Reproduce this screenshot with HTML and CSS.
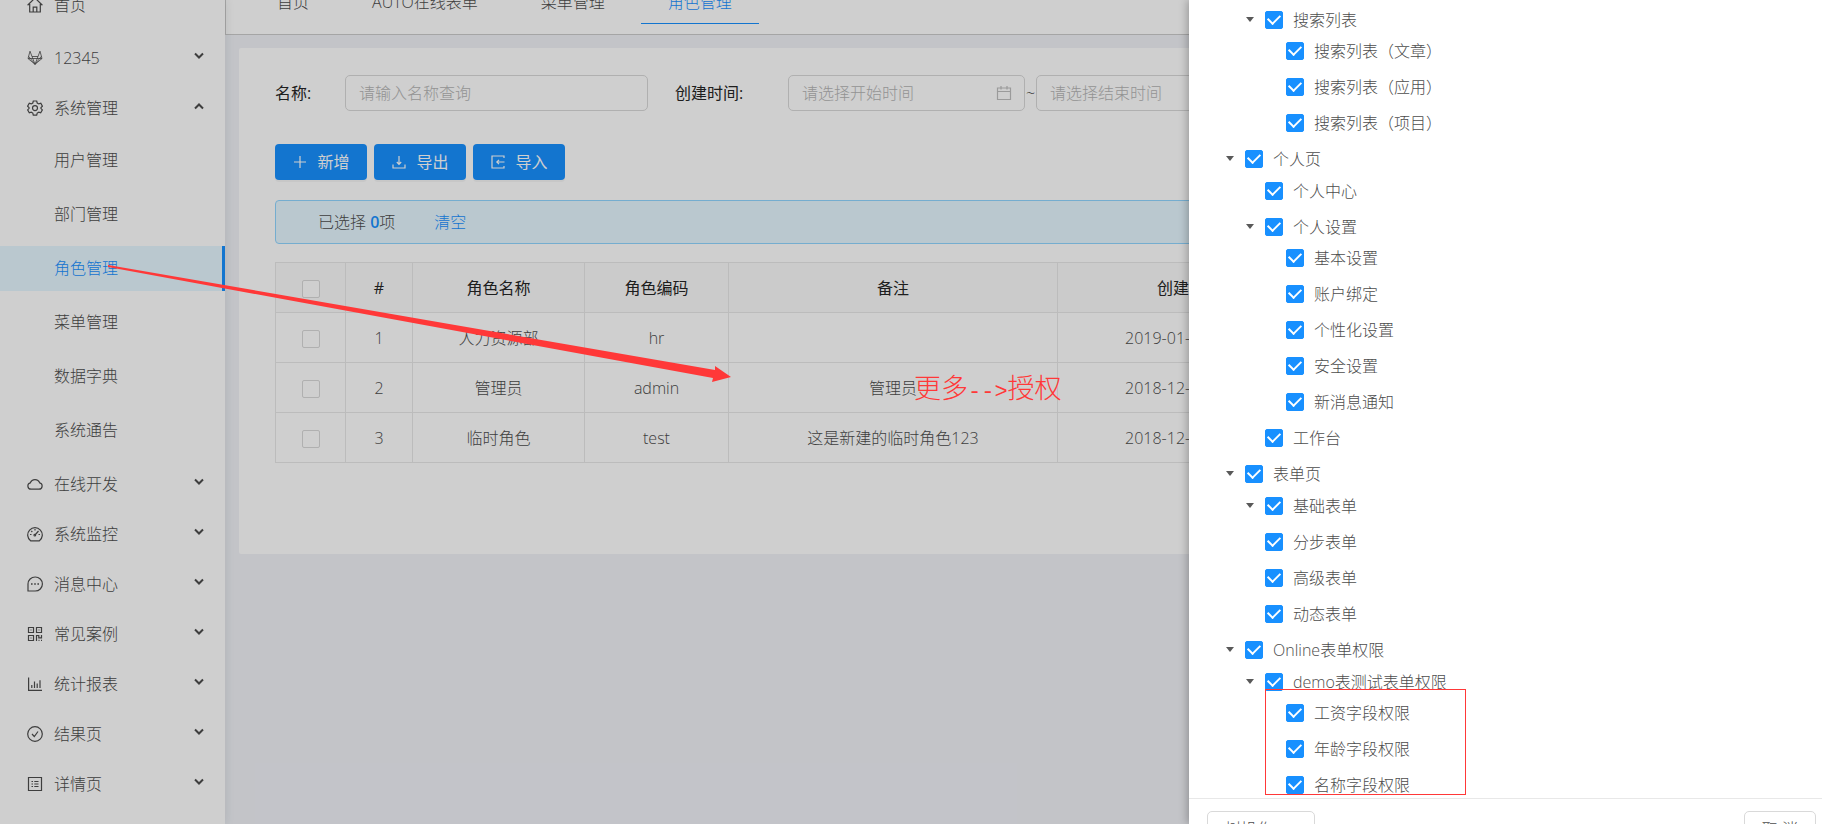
FILE: index.html
```html
<!DOCTYPE html>
<html lang="zh-CN">
<head>
<meta charset="utf-8">
<title>角色管理</title>
<link rel="stylesheet" href="styles.css">
</head>
<body>
<svg class="defs" aria-hidden="true">
  <symbol id="down" viewBox="0 0 10 10"><path d="M1 2.5 5 6.5 9 2.5" stroke-width="2"/></symbol>
  <symbol id="up" viewBox="0 0 10 10"><path d="M1 7.5 5 3.5 9 7.5" stroke-width="2"/></symbol>
  <symbol id="calendar" viewBox="0 0 16 16"><path d="M1.5 3h13v11.500h-13zM1.500 6.500h13M5 1v3.500M11 1v3.500"/></symbol>
</svg>

<div class="app">
  <aside class="sidebar">
    <nav class="menu">
      <a class="item home" href="#"><svg class="icon" viewBox="0 0 16 16"><path d="M.6 8.200 8 1l7.400 7.200M2.700 7v8h10.600V7M6.200 15v-4.800h3.600V15"/></svg><span>首页</span></a>
      <a class="item" href="#"><svg class="icon thin" viewBox="0 0 16 16"><path d="M3 1.200 1 8.500 8 14.300l7-5.800-2-7.300-2 5.300H5zM1 8.500h14M5 6.500 8 14.300l3-7.800M1.600 6.300 8 14.300l6.400-8"/></svg><span>12345</span><svg class="arrow"><use href="#down"/></svg></a>
      <a class="item" href="#"><svg class="icon" viewBox="0 0 16 16"><path d="M6.300 1h3.400l.5 2 1.600.9 2-.6 1.600 2.900L14 7.600v1l1.400 1.300-1.700 2.900-1.900-.6-1.600.9-.5 2H6.300l-.5-2-1.600-.9-1.900.6L.6 9.900 2 8.600v-1L.6 6.200l1.700-2.900 1.900.6 1.600-.9z"/><circle cx="8" cy="8.100" r="2.500"/></svg><span>系统管理</span><svg class="arrow"><use href="#up"/></svg></a>
      <div class="submenu">
        <a class="subitem" href="#">用户管理</a>
        <a class="subitem" href="#">部门管理</a>
        <a class="subitem selected" href="#">角色管理</a>
        <a class="subitem" href="#">菜单管理</a>
        <a class="subitem" href="#">数据字典</a>
        <a class="subitem" href="#">系统通告</a>
      </div>
      <a class="item" href="#"><svg class="icon" viewBox="0 0 16 16"><path d="M4 13.200h8a3.200 3.200 0 0 0 .7-6.300 5 5 0 0 0-9.400 0A3.200 3.200 0 0 0 4 13.200z"/></svg><span>在线开发</span><svg class="arrow"><use href="#down"/></svg></a>
      <a class="item" href="#"><svg class="icon" viewBox="0 0 16 16"><path d="M3.600 14.800a7.300 7.300 0 1 1 8.800 0zM8 3v1.500M3 8.500h1.500M11.500 8.500H13M4.300 5l1 1M8 9l3.500-4"/><circle cx="7.800" cy="9.200" r=".8"/></svg><span>系统监控</span><svg class="arrow"><use href="#down"/></svg></a>
      <a class="item" href="#"><svg class="icon" viewBox="0 0 16 16"><path d="M1 15V8a7.200 7 0 1 1 7.200 7z"/><path d="M4 8h1.600M7.200 8h1.600M10.400 8H12" stroke-width="1.600"/></svg><span>消息中心</span><svg class="arrow"><use href="#down"/></svg></a>
      <a class="item" href="#"><svg class="icon" viewBox="0 0 16 16"><path d="M1.500 1.500h5v5h-5zM9.500 1.500h5v5h-5zM1.500 9.500h5v5h-5zM9.500 15V9.500h2.300v2.300h2.700V9M3.500 4h1M11.500 4h1M3.500 12h1M11.500 14.300h1M14 14.300h1"/></svg><span>常见案例</span><svg class="arrow"><use href="#down"/></svg></a>
      <a class="item" href="#"><svg class="icon" viewBox="0 0 16 16"><path d="M1.600 1.500v12.800H15M4.800 12V9M7.500 12V5.500M10.200 12V7.500M13 12V4.200"/></svg><span>统计报表</span><svg class="arrow"><use href="#down"/></svg></a>
      <a class="item" href="#"><svg class="icon" viewBox="0 0 16 16"><circle cx="8" cy="8" r="7.300"/><path d="m5 8 2.300 2.500L11 5.500"/></svg><span>结果页</span><svg class="arrow"><use href="#down"/></svg></a>
      <a class="item" href="#"><svg class="icon" viewBox="0 0 16 16"><path d="M1.500 1.500h13v13h-13zM4.500 5.500H6M4.500 8H6M4.500 10.500H6M7.300 5.500h4.200M7.300 8h4.200M7.300 10.500h4.200"/></svg><span>详情页</span><svg class="arrow"><use href="#down"/></svg></a>
    </nav>
  </aside>

  <div class="page">
    <header class="tabs">
      <a class="tab" href="#">首页</a>
      <a class="tab" href="#">AUTO在线表单</a>
      <a class="tab" href="#">菜单管理</a>
      <a class="tab active" href="#">角色管理</a>
    </header>
    <main class="content">
      <section class="card">
        <form class="filters">
          <label class="name-label" for="name">名称:</label>
          <input class="field name-field" id="name" type="text" placeholder="请输入名称查询">
          <label class="time-label" for="start">创建时间:</label>
          <span class="date"><input class="field" id="start" type="text" placeholder="请选择开始时间"><svg class="icon cal"><use href="#calendar"/></svg></span>
          <span class="tilde">~</span>
          <span class="date"><input class="field" type="text" aria-label="结束时间" placeholder="请选择结束时间"><svg class="icon cal"><use href="#calendar"/></svg></span>
        </form>
        <div class="actions">
          <button class="primary" type="button"><svg class="icon" viewBox="0 0 16 16"><path d="M8 2v12M2 8h12"/></svg>新增</button>
          <button class="primary" type="button"><svg class="icon" viewBox="0 0 16 16"><path d="M2 10.500V14h12v-3.500M8 2v8M5.800 8 8 10.300 10.200 8"/></svg>导出</button>
          <button class="primary" type="button"><svg class="icon" viewBox="0 0 16 16"><path d="M14 4V2H2v12h12v-2M14.500 8H7M9 5.800 6.800 8 9 10.200"/></svg>导入</button>
        </div>
        <div class="notice"><span>已选择 <b>0</b>项</span><a href="#">清空</a></div>
        <table class="roles">
          <colgroup><col class="c-check"><col class="c-no"><col class="c-name"><col class="c-code"><col class="c-note"><col class="c-date"><col></colgroup>
          <thead><tr><th><input class="check" type="checkbox" aria-label="全选"></th><th>#</th><th>角色名称</th><th>角色编码</th><th>备注</th><th>创建时间</th><th></th></tr></thead>
          <tbody>
            <tr><td><input class="check" type="checkbox" aria-label="人力资源部"></td><td>1</td><td>人力资源部</td><td>hr</td><td></td><td>2019-01-21 18:07</td><td></td></tr>
            <tr><td><input class="check" type="checkbox" aria-label="管理员"></td><td>2</td><td>管理员</td><td>admin</td><td>管理员</td><td>2018-12-21 18:03</td><td></td></tr>
            <tr><td><input class="check" type="checkbox" aria-label="临时角色"></td><td>3</td><td>临时角色</td><td>test</td><td>这是新建的临时角色123</td><td>2018-12-20 19:59</td><td></td></tr>
          </tbody>
        </table>
      </section>
    </main>
  </div>
</div>

<div class="mask"></div>

<aside class="drawer">
  <div class="tree-pane">
    <ul class="tree">
      <li>
        <ul>
          <li><label class="node open"><input class="check" type="checkbox" checked>搜索列表</label>
            <ul>
              <li><label class="node"><input class="check" type="checkbox" checked>搜索列表（文章）</label></li>
              <li><label class="node"><input class="check" type="checkbox" checked>搜索列表（应用）</label></li>
              <li><label class="node"><input class="check" type="checkbox" checked>搜索列表（项目）</label></li>
            </ul>
          </li>
        </ul>
      </li>
      <li><label class="node open"><input class="check" type="checkbox" checked>个人页</label>
        <ul>
          <li><label class="node"><input class="check" type="checkbox" checked>个人中心</label></li>
          <li><label class="node open"><input class="check" type="checkbox" checked>个人设置</label>
            <ul>
              <li><label class="node"><input class="check" type="checkbox" checked>基本设置</label></li>
              <li><label class="node"><input class="check" type="checkbox" checked>账户绑定</label></li>
              <li><label class="node"><input class="check" type="checkbox" checked>个性化设置</label></li>
              <li><label class="node"><input class="check" type="checkbox" checked>安全设置</label></li>
              <li><label class="node"><input class="check" type="checkbox" checked>新消息通知</label></li>
            </ul>
          </li>
          <li><label class="node"><input class="check" type="checkbox" checked>工作台</label></li>
        </ul>
      </li>
      <li><label class="node open"><input class="check" type="checkbox" checked>表单页</label>
        <ul>
          <li><label class="node open"><input class="check" type="checkbox" checked>基础表单</label></li>
          <li><label class="node"><input class="check" type="checkbox" checked>分步表单</label></li>
          <li><label class="node"><input class="check" type="checkbox" checked>高级表单</label></li>
          <li><label class="node"><input class="check" type="checkbox" checked>动态表单</label></li>
        </ul>
      </li>
      <li><label class="node open"><input class="check" type="checkbox" checked>Online表单权限</label>
        <ul>
          <li><label class="node open"><input class="check" type="checkbox" checked>demo表测试表单权限</label>
            <ul>
              <li><label class="node"><input class="check" type="checkbox" checked>工资字段权限</label></li>
              <li><label class="node"><input class="check" type="checkbox" checked>年龄字段权限</label></li>
              <li><label class="node"><input class="check" type="checkbox" checked>名称字段权限</label></li>
            </ul>
          </li>
        </ul>
      </li>
    </ul>
  </div>
  <footer class="drawer-foot">
    <button class="plain" type="button">树操作<svg class="arrow"><use href="#up"/></svg></button>
    <button class="plain" type="button">取 消</button>
  </footer>
</aside>

<svg class="pointer" viewBox="0 0 640 130" aria-hidden="true"><path d="M8 5v2L613 118l-1 4 19-5-16-11v4z"/></svg>
<p class="hint">更多<span>--&gt;</span>授权</p>
<div class="frame"></div>
</body>
</html>
```
FILE: styles.css
```css
* { box-sizing: border-box; }

body {
  margin: 0;
  height: 100vh;
  overflow: hidden;
  position: relative;
  background: #f0f2f7;
  color: #4d4d4d;
  font: 300 16px/24px "Open Sans", "Noto Sans CJK SC", sans-serif;
}

a { color: inherit; text-decoration: none; }
input, button { font: inherit; color: inherit; }
ul { list-style: none; margin: 0; padding: 0; }

.defs { position: absolute; width: 0; height: 0; }
svg { fill: none; stroke: currentColor; }
.icon { width: 16px; height: 16px; stroke-width: 1.2; flex: none; }
.icon.thin { stroke-width: 0.8; }
.arrow { width: 10px; height: 10px; flex: none; }

.app { display: flex; min-height: 100vh; }

/* Side menu */
.sidebar {
  flex: 0 0 225px;
  background: #fff;
  box-shadow: 2px 0 8px rgba(29, 35, 41, 0.08);
  z-index: 1;
}
.item { display: flex; align-items: center; height: 50px; padding: 0 21px 0 27px; }
.item span { margin-left: 11px; }
.item .arrow { margin: -4px 0 0 auto; }
.home { margin: -20px 0 3px; }
.submenu { display: grid; gap: 9px; padding: 5px 0 6px; }
.subitem { height: 45px; line-height: 45px; padding-left: 54px; }
.selected { background: #e6f7ff; color: #1890ff; border-right: 3px solid #1890ff; }

/* Page */
.page { flex: 1; min-width: 0; }
.tabs {
  display: flex;
  align-items: flex-end;
  gap: 9px;
  height: 35px;
  padding: 0 24px 10px;
  background: #fff;
  border: solid #ccc;
  border-width: 0 0 1px 1px;
}
.tab { padding: 0 27px 9px; border-bottom: 1px solid transparent; white-space: nowrap; }
.tab.active { color: #1890ff; border-color: #1890ff; }
.content { padding: 13px 14px; }
.card { background: #fff; border-radius: 2px; padding: 27px 36px 91px; }

.filters { display: flex; align-items: center; color: #262626; white-space: nowrap; }
.filters label { font-weight: 400; }
.name-label { flex: 0 0 70px; }
.time-label { flex: 0 0 113px; }
.field {
  width: 237px;
  height: 36px;
  padding: 0 13px;
  border: 1px solid #d9d9d9;
  border-radius: 5px;
  background: #fff;
}
.field::placeholder { color: #b5b5b5; }
.name-field { width: 303px; margin-right: 27px; }
.date { display: flex; align-items: center; position: relative; }
.cal { position: absolute; right: 13px; color: #bfbfbf; }
.tilde { flex: 0 0 11px; text-align: center; }

.actions { display: flex; gap: 7px; margin: 33px 0 20px; }
.primary {
  display: flex;
  align-items: center;
  justify-content: center;
  gap: 9px;
  width: 92px;
  height: 36px;
  padding: 0;
  border: 0;
  border-radius: 4px;
  background: #1890ff;
  color: #fff;
  font-weight: 400;
  box-shadow: 0 2px 0 rgba(0, 0, 0, 0.04);
}

.notice {
  display: flex;
  gap: 39px;
  padding: 9px 42px;
  margin-bottom: 18px;
  background: #e6f7ff;
  border: 1px solid #91d5ff;
  border-radius: 4px;
  line-height: 24px;
}
.notice a, .notice b { color: #1890ff; }
.notice b { font-weight: 600; }

.roles { width: 100%; table-layout: fixed; border-collapse: collapse; text-align: center; }
.roles th, .roles td { height: 50px; padding: 0; border: 1px solid #e8e8e8; }
.roles th { background: #fafafa; color: #262626; font-weight: 400; }
.c-check { width: 70px; }
.c-no { width: 67px; }
.c-name { width: 172px; }
.c-code { width: 144px; }
.c-note { width: 329px; }
.c-date { width: 263px; }

.check {
  appearance: none;
  display: inline-grid;
  place-items: center;
  width: 18px;
  height: 18px;
  margin: 0;
  border: 1px solid #d9d9d9;
  border-radius: 2px;
  background: #fff;
  vertical-align: middle;
}
.check:checked { background: #1890ff; border-color: #1890ff; }
.check:checked::before {
  content: "";
  width: 6px;
  height: 10px;
  margin-top: -3px;
  border: solid #fff;
  border-width: 0 2px 2px 0;
  transform: rotate(45deg);
}

/* Drawer */
.mask { position: absolute; inset: 0; z-index: 2; background: rgba(0, 0, 0, 0.19); }
.drawer {
  position: absolute;
  inset: 0 0 0 auto;
  z-index: 3;
  width: 633px;
  display: flex;
  flex-direction: column;
  background: #fff;
  box-shadow: -2px 0 8px rgba(0, 0, 0, 0.25);
}
.tree-pane { flex: 1; min-height: 0; overflow: hidden; padding: 6px 36px; }
.tree li + li { margin-top: 9px; }
.tree ul { padding: 5px 0 0 20px; }
.tree ul ul { padding: 4px 0 0 21px; }
.tree > li:first-child > ul { padding-top: 0; }
.node { display: flex; align-items: center; height: 27px; padding-left: 20px; }
.node .check { margin-right: 10px; flex: none; }
.open { padding-left: 0; }
.open::before {
  content: "";
  border: solid transparent;
  border-width: 5px 4px 0;
  border-top-color: #595959;
  margin: 0 11px 0 1px;
}
.drawer-foot {
  display: flex;
  justify-content: space-between;
  height: 26px;
  padding: 12px 6px 0 18px;
  border-top: 1px solid #e8e8e8;
}
.plain {
  display: flex;
  align-items: center;
  gap: 14px;
  height: 36px;
  padding: 0 17px;
  border: 1px solid #d9d9d9;
  border-radius: 5px;
  background: #fff;
  white-space: pre;
}

/* Annotations over the page */
.pointer { position: absolute; left: 100px; top: 260px; z-index: 4; width: 640px; height: 130px; fill: #ff3838; stroke: none; }
.hint {
  position: absolute;
  left: 914px;
  top: 369px;
  z-index: 4;
  margin: 0;
  color: #ff3838;
  font: 300 27px/36px "Noto Sans CJK SC", sans-serif;
  white-space: nowrap;
}
.hint span { font: 22px/36px "Liberation Mono", monospace; }
.frame { position: absolute; left: 1265px; top: 689px; z-index: 4; width: 201px; height: 106px; border: 1px solid #ff3838; }
```
